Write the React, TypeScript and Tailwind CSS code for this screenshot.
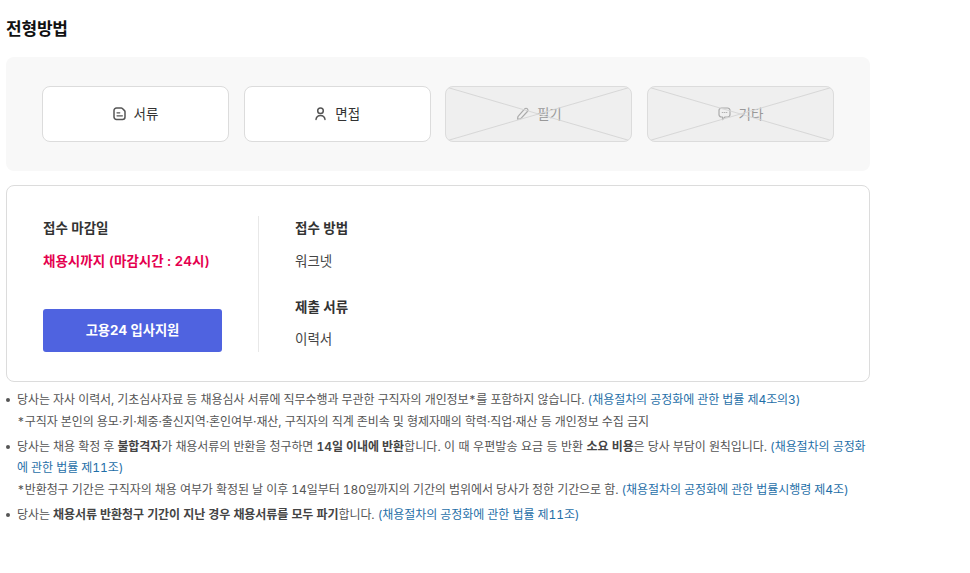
import React from "react";

const FONT = "font-['Inter','Noto_Sans_CJK_KR',sans-serif]";

function DocIcon() {
    return (
        <svg width="14" height="14" viewBox="0 0 14 14" fill="none" stroke="#555" strokeWidth="1.5">
            <path d="M3.500 1h4.700c.5 0 .9.2 1.200.5l2.100 2.100c.3.3.5.7.5 1.200V10a2.500 2.500 0 0 1-2.500 2.500H3.500A2.500 2.500 0 0 1 1 10V3.500A2.500 2.500 0 0 1 3.500 1z" strokeLinejoin="round" />
            <path d="M4 5.800h2.800M4 8.800h5.400" strokeLinecap="round" strokeWidth="1.200" />
        </svg>
    );
}

function PersonIcon() {
    return (
        <svg width="14" height="14" viewBox="0 0 14 14" fill="none" stroke="#555" strokeWidth="1.500" strokeLinecap="round">
            <circle cx="6.500" cy="3.800" r="2.800" />
            <path d="M2 12.400c.4-2.600 2-4 4.500-4s4.100 1.400 4.500 4" />
        </svg>
    );
}

function PencilIcon() {
    return (
        <svg width="14" height="14" viewBox="0 0 14 14" fill="none" stroke="#aaa" strokeWidth="1.200" strokeLinejoin="round">
            <path d="M8.700 1.800a1.900 1.900 0 0 1 2.700 2.700l-6.400 6.800c-.4.400-.9.600-1.400.7l-2 .2.200-2c.1-.5.300-1 .7-1.400z" />
        </svg>
    );
}

function ChatIcon() {
    return (
        <svg width="14" height="14" viewBox="0 0 14 14" fill="none" stroke="#aaa" strokeWidth="1.200" strokeLinejoin="round">
            <path d="M3.500 1h6a2.500 2.500 0 0 1 2.500 2.500v4a2.500 2.500 0 0 1-2.500 2.500H7L4.500 12.500V10h-1A2.500 2.500 0 0 1 1 7.500v-4A2.500 2.500 0 0 1 3.500 1z" />
            <path d="M4.200 5.500h.7M6.200 5.500h.7M8.200 5.500h.7" strokeLinecap="round" strokeWidth="0.900" />
        </svg>
    );
}

function MethodButton({ label, icon, disabled }: { label: string; icon: React.ReactNode; disabled?: boolean }) {
    if (disabled) {
        return (
            <div className="relative h-14 w-[187px] overflow-hidden rounded-lg border border-[#dcdcdc] bg-[#efefef]">
                <div className="flex h-full items-center justify-center gap-[7px] text-[13.5px] text-[#999]">
                    {icon}
                    <span>{label}</span>
                </div>
                <svg className="absolute inset-0 h-full w-full" viewBox="0 0 187 56" preserveAspectRatio="none">
                    <path d="M0 0L187 56M187 0L0 56" stroke="#d6d6d6" strokeWidth="1" />
                </svg>
            </div>
        );
    }
    return (
        <div className="flex h-14 w-[187px] items-center justify-center gap-[7px] rounded-lg border border-[#dcdcdc] bg-white text-[13.5px] text-[#333]">
            {icon}
            <span>{label}</span>
        </div>
    );
}

function Link({ children }: { children: React.ReactNode }) {
    return <span className="text-[#1f6fa8]">{children}</span>;
}

function Bullet({ children }: { children: React.ReactNode }) {
    return (
        <li className="relative pl-[11px] before:absolute before:left-0 before:top-[9px] before:h-1 before:w-1 before:rounded-full before:bg-[#555] before:content-['']">
            {children}
        </li>
    );
}

export default function App() {
    return (
        <div className={`${FONT} w-[970px] bg-white pl-[6px] pt-[18px] pb-[40px]`}>
            <div className="w-[864px]">
                <h2 className="text-[17px] font-bold leading-[22px] tracking-[-0.2px] text-[#111]">전형방법</h2>

                {/* Methods */}
                <div className="mt-[17px] flex h-[114px] items-center gap-[14.67px] rounded-lg bg-[#f8f8f8] pl-9">
                    <MethodButton label="서류" icon={<DocIcon />} />
                    <MethodButton label="면접" icon={<PersonIcon />} />
                    <MethodButton label="필기" disabled icon={<PencilIcon />} />
                    <MethodButton label="기타" disabled icon={<ChatIcon />} />
                </div>

                {/* Apply info */}
                <div className="mt-[14px] flex h-[197px] rounded-lg border border-[#dcdcdc] pl-9 pt-[30px]">
                    <div className="flex h-[136px] w-[216px] flex-col border-r border-[#e8e8e8]">
                        <div className="text-[13.5px] font-semibold leading-[24px] text-[#333]">접수 마감일</div>
                        <div className="mt-[8.500px] text-[13.5px] font-semibold leading-[24px] tabular-nums text-[#e5004f]">채용시까지 (마감시간 : 24시)</div>
                        <button className="mt-auto h-[43px] w-[179px] rounded-[3px] bg-[#4f63e0] text-[13.3px] font-bold text-white">고용24 입사지원</button>
                    </div>
                    <div className="pl-9">
                        <div className="text-[13.5px] font-semibold leading-[24px] text-[#333]">접수 방법</div>
                        <div className="mt-[8.500px] text-[13.5px] leading-[24px] text-[#444]">워크넷</div>
                        <div className="mt-[22px] text-[13.5px] font-semibold leading-[24px] text-[#333]">제출 서류</div>
                        <div className="mt-[8.500px] text-[13.5px] leading-[24px] text-[#444]">이력서</div>
                    </div>
                </div>

                {/* Notes */}
                <ul className="mt-[7px] flex flex-col gap-[3.4px] text-[12px] leading-[21.6px] tracking-[-0.07px] tabular-nums text-[#555]">
                    <Bullet>
                        당사는 자사 이력서, 기초심사자료 등 채용심사 서류에 직무수행과 무관한 구직자의 개인정보*를 포함하지 않습니다.{" "}
                        <Link>(채용절차의 공정화에 관한 법률 제4조의3)</Link>
                        <br />
                        *구직자 본인의 용모·키·체중·출신지역·혼인여부·재산, 구직자의 직계 존비속 및 형제자매의 학력·직업·재산 등 개인정보 수집 금지
                    </Bullet>
                    <Bullet>
                        당사는 채용 확정 후 <b className="font-semibold text-[#444]">불합격자</b>가 채용서류의 반환을 청구하면{" "}
                        <b className="font-semibold text-[#444]">14일 이내에 반환</b>
                        <span className="tracking-[0.1px]">합니다. 이 때 우편발송 요금 등 반환 </span>
                        <b className="font-semibold text-[#444]">소요 비용</b>은 당사 부담이 원칙입니다.{" "}
                        <Link>(채용절차의 공정화에 관한 법률 제11조)</Link>
                        <br />
                        *반환청구 기간은 구직자의 채용 여부가 확정된 날 이후 14일부터 180일까지의 기간의 범위에서 당사가 정한 기간으로 함.{" "}
                        <Link>(채용절차의 공정화에 관한 법률시행령 제4조)</Link>
                    </Bullet>
                    <Bullet>
                        당사는 <b className="font-semibold text-[#444]">채용서류 반환청구 기간이 지난 경우 채용서류를 모두 파기</b>합니다.{" "}
                        <Link>(채용절차의 공정화에 관한 법률 제11조)</Link>
                    </Bullet>
                </ul>
            </div>
        </div>
    );
}
